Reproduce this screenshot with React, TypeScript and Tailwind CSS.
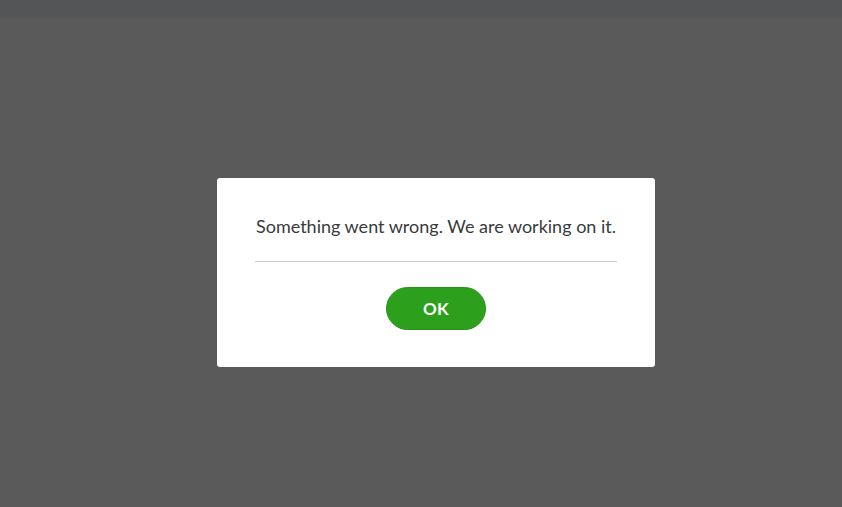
export default function App() {
    return (
        <div className="flex flex-col w-[842px] h-[507px] bg-[#5a5a5a] font-['Lato',sans-serif]">
            <div className="h-[19px] bg-[#545557] border-b border-[#575758]" />
            <div className="pt-[159px] pl-[217px]">
                <div className="w-[438px] bg-white rounded-[3px] px-[38px] pt-[36px] pb-[37px] flex flex-col items-center">
                    <p className="text-[18px] leading-[24px] text-[#393a3d] whitespace-nowrap">
                        Something went wrong. We are working on it.
                    </p>
                    <div className="w-full h-px bg-[#c9c9cb] mt-[23px]" />
                    <button className="mt-[25px] w-[100px] h-[43px] rounded-full bg-[#2ca01c] border border-[#279217] text-white font-bold text-[17px] tracking-[0.3px]">
                        OK
                    </button>
                </div>
            </div>
        </div>
    );
}
